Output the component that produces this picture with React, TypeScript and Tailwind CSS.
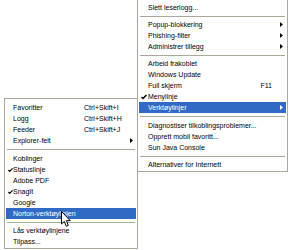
import React from "react";

type Item =
  | { type: "sep"; h?: number }
  | { type: "item"; label: string; shortcut?: string; sub?: boolean; check?: boolean; active?: boolean };

const Check = ({ white }: { white?: boolean }) => (
  <svg width="6" height="6" viewBox="0 0 6 6">
    <path d="M0.5 3 L2 4.6 L5.5 1" fill="none" stroke={white ? "#fff" : "#000"} strokeWidth="1.4" />
  </svg>
);

const Arrow = ({ white }: { white?: boolean }) => (
  <svg width="3" height="5" viewBox="0 0 3 5">
    <path d="M0 0 L3 2.5 L0 5 Z" fill={white ? "#fff" : "#000"} />
  </svg>
);

function Menu({ items, checkW, labelW }: { items: Item[]; checkW: string; labelW?: string }) {
  return (
    <div className="flex flex-col">
      {items.map((it, i) => {
        if (it.type === "sep") {
          return (
            <div key={i} className={"flex flex-col pt-[3px] " + (it.h === 7 ? "h-[7px]" : "h-[6px]")}>
              <div className="h-px bg-[#aca899] mx-[1px]" />
            </div>
          );
        }
        return (
          <div
            key={i}
            className={
              "flex items-center h-[11px] leading-[11px] whitespace-nowrap " +
              (it.active ? "bg-[#316ac5] text-white" : "text-black")
            }
          >
            <div className={"flex items-center pl-[2px] h-full " + checkW}>{it.check && <Check white={it.active} />}</div>
            <div className={labelW ? labelW : "flex-1"}>{it.label}</div>
            {labelW ? <div className="flex-1">{it.shortcut}</div> : it.shortcut && <div className="pr-[8px]">{it.shortcut}</div>}
            <div className="flex items-center justify-end w-[6px] pr-[3px]">{it.sub && <Arrow white={it.active} />}</div>
          </div>
        );
      })}
    </div>
  );
}

const mainItems: Item[] = [
  { type: "item", label: "Slett leserlogg..." },
  { type: "sep" },
  { type: "item", label: "Popup-blokkering", sub: true },
  { type: "item", label: "Phishing-filter", sub: true },
  { type: "item", label: "Administrer tillegg", sub: true },
  { type: "sep" },
  { type: "item", label: "Arbeid frakoblet" },
  { type: "item", label: "Windows Update" },
  { type: "item", label: "Full skjerm", shortcut: "F11" },
  { type: "item", label: "Menylinje", check: true },
  { type: "item", label: "Verktøylinjer", sub: true, active: true },
  { type: "sep", h: 7 },
  { type: "item", label: "Diagnostiser tilkoblingsproblemer..." },
  { type: "item", label: "Opprett mobil favoritt..." },
  { type: "item", label: "Sun Java Console" },
  { type: "sep" },
  { type: "item", label: "Alternativer for Internett" },
];

const subItems: Item[] = [
  { type: "item", label: "Favoritter", shortcut: "Ctrl+Skift+I" },
  { type: "item", label: "Logg", shortcut: "Ctrl+Skift+H" },
  { type: "item", label: "Feeder", shortcut: "Ctrl+Skift+J" },
  { type: "item", label: "Explorer-felt", sub: true },
  { type: "sep", h: 7 },
  { type: "item", label: "Koblinger" },
  { type: "item", label: "Statuslinje", check: true },
  { type: "item", label: "Adobe PDF" },
  { type: "item", label: "SnagIt", check: true },
  { type: "item", label: "Google" },
  { type: "item", label: "Norton-verktøylinjen", active: true },
  { type: "sep" },
  { type: "item", label: "Lås verktøylinjene" },
  { type: "item", label: "Tilpass..." },
];

export default function App() {
  return (
    <div
      className="relative w-[290px] h-[250px] overflow-hidden bg-white text-[7px]"
      style={{ fontFamily: '"Liberation Sans", Arial, sans-serif' }}
    >
      {/* main Tools menu */}
      <div className="absolute left-[137px] top-[-1px] w-[151px] border border-[#aca899] bg-white pt-[2px] pb-[1px] px-[1px]">
        <Menu items={mainItems} checkW="w-[9px]" />
      </div>
      {/* toolbars submenu */}
      <div className="absolute left-[4px] top-[98px] w-[134px] border border-[#aca899] bg-white pt-[3px] pb-[1px] px-[1px]">
        <Menu items={subItems} checkW="w-[7px]" labelW="w-[71px]" />
      </div>
      {/* mouse cursor */}
      <svg width="11" height="17" viewBox="0 0 11 17" className="absolute left-[61px] top-[211px]">
        <path
          d="M0.5 0.5 L0.5 13 L3.3 10.4 L5.3 15.3 L7.3 14.4 L5.4 9.7 L9.3 9.7 Z"
          fill="#fff"
          stroke="#000"
          strokeWidth="1"
        />
      </svg>
    </div>
  );
}
